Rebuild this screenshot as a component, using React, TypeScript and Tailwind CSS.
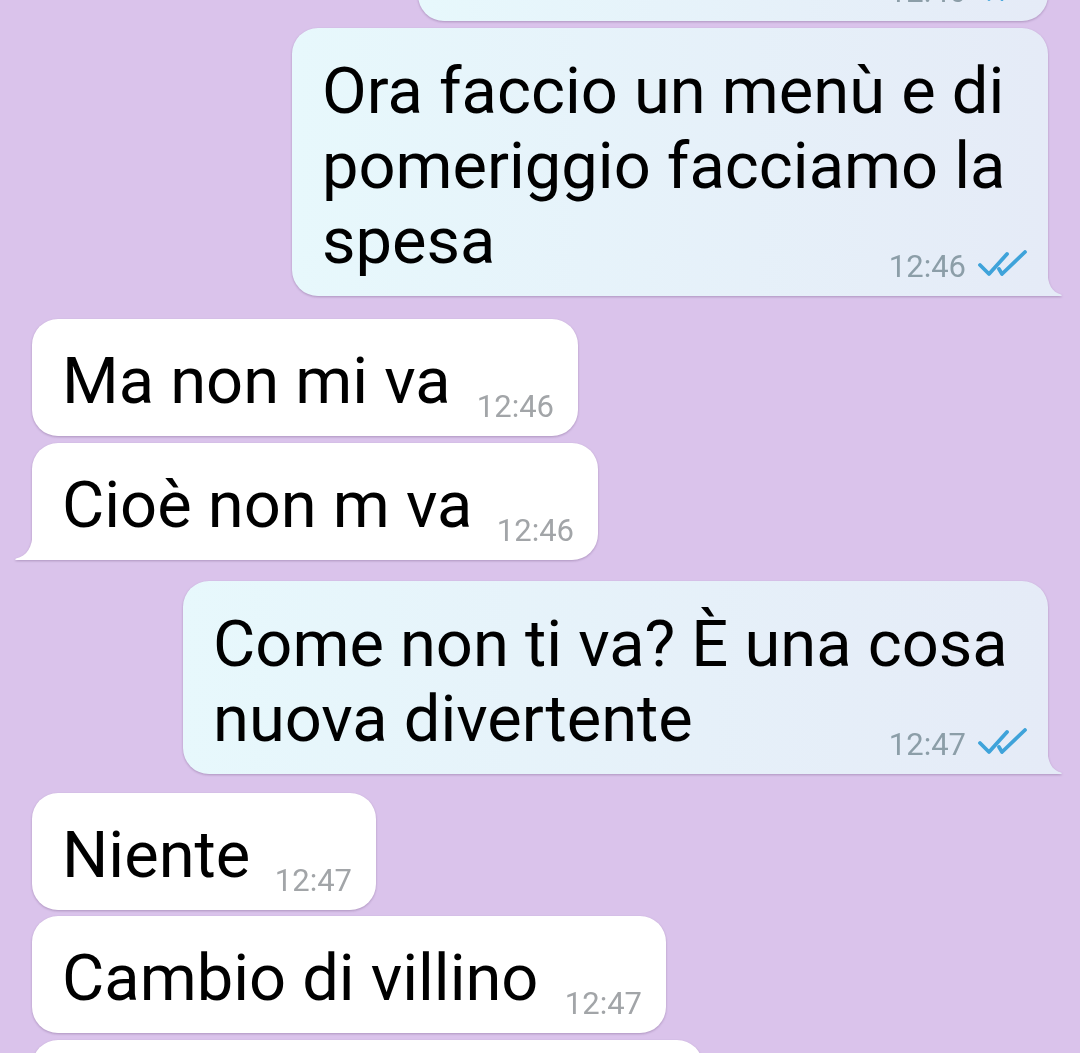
import React from "react";

type Msg = {
  lines: string[];
  time: string;
  width: string;
  tail?: boolean;
};

const Ticks = () => (
  <svg
    width="50"
    height="27"
    viewBox="0 0 50 27"
    fill="none"
    stroke="#3fa3da"
    strokeWidth="3.8"
    strokeLinecap="round"
    strokeLinejoin="round"
  >
    <path d="M2 15 L11 24 L29 4" />
    <path d="M21 19 L24 24 L47 2" />
  </svg>
);

const OutTail = () => (
  <svg
    className="absolute bottom-0 -right-[15px]"
    width="16"
    height="26"
    viewBox="0 0 16 26"
  >
    <path d="M0 0 C1 15 5 22 14 24.5 Q16 25.5 13.5 26 L0 26 Z" fill="#e5ebf7" />
  </svg>
);

const InTail = () => (
  <svg
    className="absolute bottom-0 -left-[18px]"
    width="19"
    height="28"
    viewBox="0 0 19 28"
  >
    <path d="M19 0 C18 16 13 24 2 26.5 Q0 27.5 2.5 28 L19 28 Z" fill="#ffffff" />
  </svg>
);

function Outgoing({ lines, time, width, tail }: Msg) {
  const head = lines.slice(0, -1);
  const last = lines[lines.length - 1];
  return (
    <div
      className={`relative self-end rounded-[26px] bg-gradient-to-r from-[#e7f8fc] to-[#e5ebf7] pl-[30px] pr-[20px] pt-[26px] pb-[17px] drop-shadow-[0_1px_1px_rgba(60,30,80,0.28)] ${width} ${
        tail ? "rounded-br-none" : ""
      }`}
    >
      {head.map((l, i) => (
        <div key={i} className="whitespace-nowrap text-[65px] leading-[75px] text-black">
          {l}
        </div>
      ))}
      <div className="flex items-end justify-between">
        <span className="whitespace-nowrap text-[65px] leading-[75px] text-black">{last}</span>
        <div className="-mb-[3px] flex items-end gap-[12px]">
          <span className="text-[31px] leading-[31px] text-[#8c9ea8]">{time}</span>
          <div className="mb-[5px]">
            <Ticks />
          </div>
        </div>
      </div>
      {tail && <OutTail />}
    </div>
  );
}

function Incoming({ lines, time, width, tail }: Msg) {
  return (
    <div
      className={`relative self-start rounded-[26px] bg-white pl-[30px] pr-[24px] pt-[25px] pb-[17px] drop-shadow-[0_1px_1px_rgba(60,30,80,0.28)] ${width} ${
        tail ? "rounded-bl-none" : ""
      }`}
    >
      <div className="flex items-end justify-between">
        <span className="whitespace-nowrap text-[65px] leading-[75px] text-black">{lines[0]}</span>
        <span className="-mb-[3px] text-[31px] leading-[31px] text-[#a2a5a8]">{time}</span>
      </div>
      {tail && <InTail />}
    </div>
  );
}

export default function App() {
  return (
    <div className="h-[1053px] w-[1080px] overflow-hidden bg-[#dac3eb] font-['Roboto',sans-serif]">
      <div className="-mt-[97px] flex flex-col px-8">
        <Outgoing lines={["\u00a0"]} time="12:46" width="w-[630px]" />
        <div className="mt-[7px] self-end">
          <Outgoing
            lines={["Ora faccio un menù e di", "pomeriggio facciamo la", "spesa"]}
            time="12:46"
            width="w-[756px]"
            tail
          />
        </div>
        <div className="mt-[23px]">
          <Incoming lines={["Ma non mi va"]} time="12:46" width="w-[546px]" />
        </div>
        <div className="mt-[7px]">
          <Incoming lines={["Cioè non m va"]} time="12:46" width="w-[566px]" tail />
        </div>
        <div className="mt-[21px] self-end">
          <Outgoing
            lines={["Come non ti va? È una cosa", "nuova divertente"]}
            time="12:47"
            width="w-[865px]"
            tail
          />
        </div>
        <div className="mt-[19px]">
          <Incoming lines={["Niente"]} time="12:47" width="w-[344px]" />
        </div>
        <div className="mt-[6px]">
          <Incoming lines={["Cambio di villino"]} time="12:47" width="w-[634px]" />
        </div>
        <div className="mt-[7px]">
          <Incoming lines={["\u00a0"]} time="12:47" width="w-[671px]" />
        </div>
      </div>
    </div>
  );
}
